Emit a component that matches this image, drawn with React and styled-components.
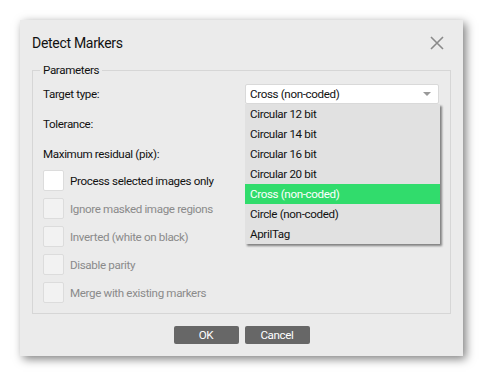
import styled, { createGlobalStyle } from 'styled-components';

const Global = createGlobalStyle`
  html, body { margin: 0; background: #ffffff; }
  body {
    font-family: Roboto, "Noto Sans", sans-serif;
    font-size: 11.6px;
    letter-spacing: -0.35px;
    color: #111;
  }
`;

const Page = styled.div`
  width: 482px;
  height: 376px;
  padding: 20px 0 0 20px;
  box-sizing: border-box;
`;

const Dialog = styled.div`
  width: 443px;
  height: 336px;
  box-sizing: border-box;
  background: #ebebeb;
  box-shadow: 3px 3px 9px rgba(0, 0, 0, 0.5);
  padding: 12px;
  display: flex;
  flex-direction: column;
`;

const TitleBar = styled.div`
  display: flex;
  align-items: center;
  justify-content: space-between;
  height: 22px;
`;

const Title = styled.div`
  font-size: 14px;
  letter-spacing: -0.3px;
  color: #111;
`;

const Close = styled.svg`
  width: 14px;
  height: 14px;
  margin-right: 7px;
`;

const Group = styled.fieldset`
  margin: 8px 0 0 0;
  padding: 6px 11px 10px 10px;
  border: 1px solid #d6d6d6;
`;

const Legend = styled.legend`
  padding: 0 3px;
  margin-left: -3px;
  line-height: 16px;
  color: #111;
`;

const Form = styled.div`
  display: grid;
  grid-template-columns: 202px 1fr;
  row-gap: 10px;
  align-items: center;
`;

const Label = styled.div`
  line-height: 20px;
`;

const Combo = styled.div`
  position: relative;
  height: 20px;
  background: #fff;
  border: 1px solid #d9d9d9;
  box-sizing: border-box;
  border-radius: 2px;
  display: flex;
  align-items: center;
  padding: 0 4px;
`;

const Arrow = styled.span`
  margin-left: auto;
  width: 0;
  height: 0;
  border-left: 4px solid transparent;
  border-right: 4px solid transparent;
  border-top: 4px solid #999;
  margin-right: 3px;
`;

const Spin = styled.div`
  height: 20px;
  background: #fff;
`;

const List = styled.div`
  position: absolute;
  top: 19px;
  left: -1px;
  width: 195px;
  background: #e1e1e1;
  box-shadow: 2px 2px 2px rgba(0, 0, 0, 0.45);
  z-index: 5;
`;

const Item = styled.div`
  height: 20px;
  line-height: 20px;
  padding: 0 5px;
  background: ${({ $active }) => ($active ? '#31dc6c' : 'transparent')};
  color: ${({ $active }) => ($active ? '#fff' : '#111')};
`;

const Checks = styled.div`
  display: flex;
  flex-direction: column;
  gap: 7px;
  margin-top: 6px;
`;

const CheckRow = styled.label`
  display: flex;
  align-items: center;
  gap: 6px;
  color: ${({ $disabled }) => ($disabled ? '#8a8a8a' : '#111')};
`;

const Box = styled.span`
  width: 21px;
  height: 21px;
  box-sizing: border-box;
  border: 1px solid #dcdcdc;
  border-radius: 2px;
  background: ${({ $disabled }) => ($disabled ? '#f2f2f2' : '#fff')};
`;

const Buttons = styled.div`
  display: flex;
  justify-content: center;
  gap: 6px;
  margin-top: 12px;
`;

const Button = styled.button`
  width: 65px;
  height: 18px;
  border: none;
  border-radius: 2px;
  background: #676767;
  color: #fff;
  font: inherit;
  letter-spacing: inherit;
  padding: 0;
  line-height: 18px;
`;

const options = ['Circular 12 bit', 'Circular 14 bit', 'Circular 16 bit', 'Circular 20 bit', 'Cross (non-coded)', 'Circle (non-coded)', 'AprilTag'];

const checks = [
  ['Process selected images only', false],
  ['Ignore masked image regions', true],
  ['Inverted (white on black)', true],
  ['Disable parity', true],
  ['Merge with existing markers', true],
];

export default function App() {
  return (
    <Page>
      <Global />
      <Dialog>
        <TitleBar>
          <Title>Detect Markers</Title>
          <Close viewBox="0 0 14 14">
            <path d="M1 1 L13 13 M13 1 L1 13" stroke="#8a8a8a" strokeWidth="1.6" />
          </Close>
        </TitleBar>
        <Group>
          <Legend>Parameters</Legend>
          <Form>
            <Label>Target type:</Label>
            <Combo>
              Cross (non-coded)
              <Arrow />
              <List>
                {options.map((o) => (
                  <Item key={o} $active={o === 'Cross (non-coded)'}>{o}</Item>
                ))}
              </List>
            </Combo>
            <Label>Tolerance:</Label>
            <Spin />
            <Label>Maximum residual (pix):</Label>
            <Spin />
          </Form>
          <Checks>
            {checks.map(([t, d]) => (
              <CheckRow key={t} $disabled={d}>
                <Box $disabled={d} />
                {t}
              </CheckRow>
            ))}
          </Checks>
        </Group>
        <Buttons>
          <Button>OK</Button>
          <Button>Cancel</Button>
        </Buttons>
      </Dialog>
    </Page>
  );
}
